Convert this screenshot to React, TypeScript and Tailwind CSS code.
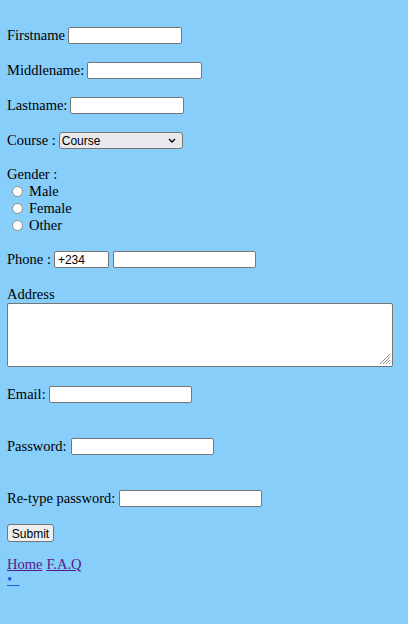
import React from "react";

const serif = "font-['Liberation_Serif',_'Times_New_Roman',_serif]";
const field =
  "h-[17px] bg-white border border-[#767676] rounded-[2px] px-[3px] text-[12px] font-['Liberation_Sans',_Arial,_sans-serif] text-black outline-none";

function Row({ className = "", children }: { className?: string; children: React.ReactNode }) {
  return <div className={`flex items-center h-[17px] ${className}`}>{children}</div>;
}

function Radio({ label }: { label: string }) {
  return (
    <Row>
      <span className="ml-[5px] mr-[6px] w-[11px] h-[11px] rounded-full bg-white border border-[#8a8a8a]" />
      <span>{label}</span>
    </Row>
  );
}

export default function App() {
  return (
    <div className={`h-[624px] w-full bg-[#87cefa] px-[7px] pt-[27px] text-[14.5px] text-black ${serif}`}>
      <Row>
        <span>Firstname</span>
        <input className={`${field} ml-[3px] w-[114px]`} />
      </Row>
      <Row className="mt-[18px]">
        <span>Middlename:</span>
        <input className={`${field} ml-[3px] w-[115px]`} />
      </Row>
      <Row className="mt-[18px]">
        <span>Lastname:</span>
        <input className={`${field} ml-[3px] w-[114px]`} />
      </Row>
      <Row className="mt-[18px]">
        <span>Course :</span>
        <div className="ml-[3px] w-[124px] h-[17px] bg-[#e9e9ed] border border-[#767676] rounded-[3px] flex items-center justify-between pl-[2px] pr-[6px] text-[12px] font-['Liberation_Sans',_Arial,_sans-serif]">
          <span>Course</span>
          <svg width="8" height="5" viewBox="0 0 8 5" fill="none">
            <path d="M1 1l3 3 3-3" stroke="#000" strokeWidth="1.3" />
          </svg>
        </div>
      </Row>
      <Row className="mt-[17px]">
        <span>Gender :</span>
      </Row>
      <Radio label="Male" />
      <Radio label="Female" />
      <Radio label="Other" />
      <Row className="mt-[17px]">
        <span>Phone :</span>
        <input className={`${field} ml-[3px] w-[55px]`} defaultValue="+234" />
        <input className={`${field} ml-[4px] w-[143px]`} />
      </Row>
      <Row className="mt-[18px]">
        <span>Address</span>
      </Row>
      <div className="relative w-[386px] h-[64px]">
        <textarea className="block w-full h-full bg-white border border-[#767676] rounded-[2px] resize-none outline-none" />
        <svg className="absolute right-[2px] bottom-[2px]" width="13" height="13" viewBox="0 0 13 13">
          <path d="M12 2L2 12M12 5L5 12M12 8L8 12M12 11L11 12" stroke="#8f8f8f" strokeWidth="1" />
        </svg>
      </div>
      <Row className="mt-[19px]">
        <span>Email:</span>
        <input className={`${field} ml-[3px] w-[143px]`} />
      </Row>
      <Row className="mt-[35px]">
        <span>Password:</span>
        <input className={`${field} ml-[4px] w-[143px]`} />
      </Row>
      <Row className="mt-[35px]">
        <span>Re-type password:</span>
        <input className={`${field} ml-[4px] w-[143px]`} />
      </Row>
      <div className="mt-[17px] h-[18px] flex items-center">
        <button className="h-[18px] w-[47px] bg-[#efefef] border border-[#767676] rounded-[3px] text-[12px] font-['Liberation_Sans',_Arial,_sans-serif] text-black">
          Submit
        </button>
      </div>
      <div className="mt-[15px] h-[15px] flex items-center gap-[4px]">
        <a href="#" className="underline text-[#551a8b]">Home</a>
        <a href="#" className="underline text-[#551a8b]">F.A.Q</a>
      </div>
      <div className="h-[16px] flex items-center">
        <a href="#" className="underline text-[#1a5fd0] whitespace-pre">{"\u2022\u00a0\u00a0"}</a>
      </div>
    </div>
  );
}
